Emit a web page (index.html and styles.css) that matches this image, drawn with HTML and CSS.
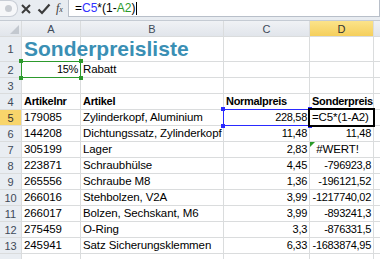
FILE: index.html
```html
<!DOCTYPE html>
<html lang="de">
  <head>
    <meta charset="UTF-8" />
    <title>Sonderpreisliste</title>
    <link rel="stylesheet" href="styles.css">
  </head>
  <body>
    <div class="fbar">
      <div class="namebox"><span class="dot"></span></div>
      <div class="tools">
        <svg width="12" height="12" viewBox="0 0 12 12"><path d="M2 2 L10 10 M10 2 L2 10" stroke="#3b3b3b" stroke-width="2"/></svg>
        <svg width="14" height="12" viewBox="0 0 14 12"><path d="M1.5 6.5 L5 10 L12.5 1.5" stroke="#3b3b3b" stroke-width="2.2" fill="none"/></svg>
        <span class="fx"><i>f</i><small>x</small></span>
      </div>
      <div class="finput">=<span class="blue">C5</span>*(1-<span class="green">A2</span>)<span class="caret"></span></div>
    </div>
    <div class="sheet">
      <div class="corner"><span></span></div>
      <div class="colh">A</div>
      <div class="colh">B</div>
      <div class="colh">C</div>
      <div class="colh sel">D</div>
      <div class="colh"></div>

      <div class="rowh">1</div>
      <div class="cell title">Sonderpreisliste</div>
      <div class="cell"></div><div class="cell"></div><div class="cell"></div><div class="cell"></div>

      <div class="rowh">2</div>
      <div class="cell num ref-green">15%<i class="h tl"></i><i class="h tr"></i><i class="h bl"></i><i class="h br"></i></div>
      <div class="cell">Rabatt</div>
      <div class="cell"></div><div class="cell"></div><div class="cell"></div>

      <div class="rowh">3</div>
      <div class="cell"></div><div class="cell"></div><div class="cell"></div><div class="cell"></div><div class="cell"></div>

      <div class="rowh">4</div>
      <div class="cell bold">Artikelnr</div>
      <div class="cell bold">Artikel</div>
      <div class="cell bold">Normalpreis</div>
      <div class="cell bold">Sonderpreis</div>
      <div class="cell"></div>

      <div class="rowh sel">5</div>
      <div class="cell">179085</div>
      <div class="cell">Zylinderkopf, Aluminium</div>
      <div class="cell num ref-blue">228,58<i class="h tl"></i><i class="h tr"></i><i class="h bl"></i><i class="h br"></i></div>
      <div class="cell active">=C5*(1-A2)</div>
      <div class="cell"></div>

      <div class="rowh">6</div>
      <div class="cell">144208</div>
      <div class="cell">Dichtungssatz, Zylinderkopf</div>
      <div class="cell num">11,48</div>
      <div class="cell num">11,48</div>
      <div class="cell"></div>

      <div class="rowh">7</div>
      <div class="cell">305199</div>
      <div class="cell">Lager</div>
      <div class="cell num">2,83</div>
      <div class="cell err">#WERT!</div>
      <div class="cell"></div>

      <div class="rowh">8</div>
      <div class="cell">223871</div>
      <div class="cell">Schraubhülse</div>
      <div class="cell num">4,45</div>
      <div class="cell num">-796923,8</div>
      <div class="cell"></div>

      <div class="rowh">9</div>
      <div class="cell">265556</div>
      <div class="cell">Schraube M8</div>
      <div class="cell num">1,36</div>
      <div class="cell num">-196121,52</div>
      <div class="cell"></div>

      <div class="rowh">10</div>
      <div class="cell">266016</div>
      <div class="cell">Stehbolzen, V2A</div>
      <div class="cell num">3,99</div>
      <div class="cell num">-1217740,02</div>
      <div class="cell"></div>

      <div class="rowh">11</div>
      <div class="cell">266017</div>
      <div class="cell">Bolzen, Sechskant, M6</div>
      <div class="cell num">3,99</div>
      <div class="cell num">-893241,3</div>
      <div class="cell"></div>

      <div class="rowh">12</div>
      <div class="cell">275459</div>
      <div class="cell">O-Ring</div>
      <div class="cell num">3,3</div>
      <div class="cell num">-876331,5</div>
      <div class="cell"></div>

      <div class="rowh">13</div>
      <div class="cell">245941</div>
      <div class="cell">Satz Sicherungsklemmen</div>
      <div class="cell num">6,33</div>
      <div class="cell num">-1683874,95</div>
      <div class="cell"></div>

      <div class="rowh"></div>
      <div class="cell"></div><div class="cell"></div><div class="cell"></div><div class="cell"></div><div class="cell"></div>
    </div>
  </body>
</html>
```
FILE: styles.css
```css
body {
  margin: 0;
  width: 380px;
  height: 259px;
  overflow: hidden;
  background: #fff;
  font-family: "Liberation Sans", Arial, sans-serif;
  font-size: 11.5px;
  color: #000;
}

/* formula bar */
.fbar {
  height: 21px;
  display: flex;
  background: #e8ecf1;
  box-sizing: border-box;
  border-bottom: 1px solid #c5cbd3;
}
.namebox {
  width: 18px;
  height: 17px;
  background: #f6f7f9;
  border: 1px solid #c9ced6;
  border-left: 0;
  border-radius: 0 8px 8px 0;
  display: flex;
  align-items: center;
  justify-content: center;
  box-sizing: border-box;
}
.dot {
  width: 7px;
  height: 7px;
  border-radius: 50%;
  background: #c8ccd2;
}
.tools {
  width: 50px;
  height: 17px;
  display: flex;
  align-items: center;
  gap: 5px;
  padding-left: 2px;
  box-sizing: border-box;
}
.fx {
  font-family: "Liberation Serif", serif;
  font-size: 12px;
  color: #3b3b3b;
}
.fx small {
  font-size: 8px;
  font-style: italic;
}
.finput {
  flex: 1;
  height: 17px;
  background: #fff;
  border: 1px solid #b8bfc9;
  border-top: 0;
  box-sizing: border-box;
  padding-left: 6px;
  font-size: 12px;
  display: flex;
  align-items: center;
}
.blue { color: #3232ff; }
.green { color: #2a9a2a; }
.caret {
  width: 1px;
  height: 13px;
  background: #000;
  margin-left: 1px;
}

/* grid */
.sheet {
  display: grid;
  grid-template-columns: 21px 58px 142px 85px 63px 1fr;
  grid-template-rows: 15px 24px repeat(12, 15px) 10px;
  gap: 1px;
  background: #dadcdd;
}
.corner, .colh, .rowh {
  background: linear-gradient(#f0f2f5, #e1e5eb);
  color: #3e4a59;
  display: flex;
  align-items: center;
  justify-content: center;
  font-size: 11px;
}
.corner {
  justify-content: flex-end;
  align-items: flex-end;
  padding: 0 2px 2px 0;
  box-sizing: border-box;
}
.corner span {
  width: 0;
  height: 0;
  border-left: 9px solid transparent;
  border-bottom: 9px solid #c3c8cf;
}
.rowh {
  background: #e9edf2;
}
.colh.sel {
  background: linear-gradient(#fbe38a, #f5cf5c);
  color: #333;
}
.rowh.sel {
  background: #f8d56b;
  color: #333;
}
.cell {
  background: #fff;
  padding: 0 2px;
  line-height: 15px;
  white-space: nowrap;
  letter-spacing: -0.1px;
  position: relative;
}
.num {
  text-align: right;
  font-size: 11px;
  letter-spacing: -0.3px;
}
.bold {
  font-weight: bold;
  font-size: 11px;
  letter-spacing: -0.3px;
}
.err { text-align: center; padding-right: 10px; }
.err::before {
  content: "";
  position: absolute;
  left: 0;
  top: 0;
  border-top: 5px solid #2a9a2a;
  border-right: 5px solid transparent;
}
.title {
  font-size: 21px;
  line-height: 24px;
  font-weight: bold;
  letter-spacing: 0;
  color: #3a8fb4;
  z-index: 1;
}

/* reference and selection frames */
.ref-green { box-shadow: 0 0 0 1px #2d9a2d; z-index: 2; }
.ref-blue { box-shadow: 0 0 0 1px #2a2aff; z-index: 2; }
.active { box-shadow: 0 0 0 2px #000; z-index: 3; }
.h {
  position: absolute;
  width: 4px;
  height: 4px;
}
.ref-green .h { background: #2d9a2d; }
.ref-blue .h { background: #2a2aff; }
.tl { left: -3px; top: -3px; }
.tr { right: -3px; top: -3px; }
.bl { left: -3px; bottom: -3px; }
.br { right: -3px; bottom: -3px; }
```
